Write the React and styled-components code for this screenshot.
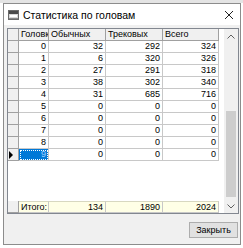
import React from "react";
import styled, {createGlobalStyle} from "styled-components";

const GlobalStyle = createGlobalStyle`
  html, body {
    margin: 0;
    padding: 0;
    background: #ffffff;
  }
  body {
    font-family: "Liberation Sans", Arial, sans-serif;
  }
`;

const rows = [
    {head: 0, normal: 32, track: 292, total: 324},
    {head: 1, normal: 6, track: 320, total: 326},
    {head: 2, normal: 27, track: 291, total: 318},
    {head: 3, normal: 38, track: 302, total: 340},
    {head: 4, normal: 31, track: 685, total: 716},
    {head: 5, normal: 0, track: 0, total: 0},
    {head: 6, normal: 0, track: 0, total: 0},
    {head: 7, normal: 0, track: 0, total: 0},
    {head: 8, normal: 0, track: 0, total: 0},
    {head: 9, normal: 0, track: 0, total: 0},
];

const COLS = "11px 30px 57px 57px 56px";

const App = () => {
    const selected = 9;
    return (
        <>
            <GlobalStyle/>
            <Page>
                <Window>
                    <TitleBar>
                        <AppIcon/>
                        <Title>Статистика по головам</Title>
                        <CloseButton aria-label="close">
                            <svg width="10" height="10" viewBox="0 0 10 10">
                                <path d="M1 1 L9 9 M9 1 L1 9" stroke="#222" strokeWidth="1" fill="none"/>
                            </svg>
                        </CloseButton>
                    </TitleBar>
                    <Body>
                        <GridFrame>
                            <GridMain>
                                <Row>
                                    <FixedCell/>
                                    <HeadCell>Головка</HeadCell>
                                    <HeadCell>Обычных</HeadCell>
                                    <HeadCell>Трековых</HeadCell>
                                    <HeadCell>Всего</HeadCell>
                                </Row>
                                {rows.map((r) => (
                                    <Row key={r.head}>
                                        <FixedCell>{r.head === selected && <Pointer/>}</FixedCell>
                                        <Cell $selected={r.head === selected}>
                                            <CellText $selected={r.head === selected}>{r.head}</CellText>
                                        </Cell>
                                        <Cell>{r.normal}</Cell>
                                        <Cell>{r.track}</Cell>
                                        <Cell>{r.total}</Cell>
                                    </Row>
                                ))}
                                <Spacer/>
                                <Row>
                                    <FixedCell/>
                                    <FooterCell $left>Итого:</FooterCell>
                                    <FooterCell>134</FooterCell>
                                    <FooterCell>1890</FooterCell>
                                    <FooterCell>2024</FooterCell>
                                </Row>
                            </GridMain>
                            <ScrollBar>
                                <Arrow>
                                    <svg width="8" height="5" viewBox="0 0 8 5">
                                        <path d="M0.5 4.5 L4 1 L7.5 4.5" stroke="#606060" strokeWidth="1" fill="none"/>
                                    </svg>
                                </Arrow>
                                <Track>
                                    <Thumb/>
                                </Track>
                                <Arrow>
                                    <svg width="8" height="5" viewBox="0 0 8 5">
                                        <path d="M0.5 0.5 L4 4 L7.5 0.5" stroke="#606060" strokeWidth="1" fill="none"/>
                                    </svg>
                                </Arrow>
                            </ScrollBar>
                        </GridFrame>
                        <ButtonRow>
                            <Button>Закрыть</Button>
                        </ButtonRow>
                    </Body>
                </Window>
            </Page>
        </>
    );
};

const AppIcon = () => (
    <IconBox>
        <svg width="11" height="10" viewBox="0 0 11 10">
            <rect x="0.5" y="0.5" width="10" height="9" fill="#d8d8d8" stroke="#6a6a6a"/>
            <rect x="1" y="1" width="9" height="3" fill="#4a4a4a"/>
            <rect x="2" y="5" width="7" height="2" fill="#ffffff"/>
            <rect x="1" y="8" width="9" height="1" fill="#8a8a8a"/>
        </svg>
    </IconBox>
);

export default App;

const Page = styled.div`
  width: 243px;
  height: 248px;
  padding: 3px 0 0 3px;
  box-sizing: border-box;
  background: linear-gradient(#e4e4e4 0 3px, #ffffff 3px);
`;

const Window = styled.div`
  width: 238px;
  height: 242px;
  box-sizing: border-box;
  border: 1px solid #8c8c8c;
  background: #f0f0f0;
  display: flex;
  flex-direction: column;
`;

const TitleBar = styled.div`
  height: 21px;
  flex: none;
  background: #ffffff;
  display: flex;
  align-items: center;
  padding-left: 1px;
`;

const IconBox = styled.div`
  width: 16px;
  display: flex;
  justify-content: center;
`;

const Title = styled.div`
  flex: 1;
  margin-left: 2px;
  font-size: 10.5px;
  color: #000;
`;

const CloseButton = styled.div`
  width: 16px;
  margin-right: 3px;
  display: flex;
  justify-content: center;
`;

const Body = styled.div`
  flex: 1;
  display: flex;
  flex-direction: column;
  padding: 3px 1px 6px 3px;
`;

const GridFrame = styled.div`
  height: 186px;
  box-sizing: border-box;
  border: 1px solid #828790;
  background: #ffffff;
  display: flex;
`;

const GridMain = styled.div`
  flex: 1;
  display: flex;
  flex-direction: column;
`;

const Row = styled.div`
  display: grid;
  grid-template-columns: ${COLS};
  height: 12px;
`;

const BaseCell = styled.div`
  box-sizing: border-box;
  border-right: 1px solid #c8c8c8;
  border-bottom: 1px solid #c8c8c8;
  font-size: 9px;
  line-height: 11px;
  color: #000;
  overflow: hidden;
  white-space: nowrap;
`;

const FixedCell = styled(BaseCell)`
  background: #f0f0f0;
  border-right-color: #a0a0a0;
  border-bottom-color: #a0a0a0;
  display: flex;
  align-items: center;
`;

const HeadCell = styled(BaseCell)`
  background: #f0f0f0;
  border-right-color: #a0a0a0;
  border-bottom-color: #a0a0a0;
  padding-left: 2px;
  text-overflow: clip;
`;

const Cell = styled(BaseCell)`
  text-align: right;
  padding-right: 2px;
  background: ${(p) => (p.$selected ? "#0078d7" : "#ffffff")};
  outline: ${(p) => (p.$selected ? "1px dotted #ffffff" : "none")};
  outline-offset: -2px;
`;

const CellText = styled.span`
  color: ${(p) => (p.$selected ? "#9fd0ff" : "#000")};
`;

const FooterCell = styled(BaseCell)`
  background: #ffffe6;
  border-top: 1px solid #d8d8c0;
  text-align: ${(p) => (p.$left ? "left" : "right")};
  padding: 0 2px;
  line-height: 10px;
`;

const Pointer = styled.div`
  margin-left: 1px;
  width: 0;
  height: 0;
  border-top: 4px solid transparent;
  border-bottom: 4px solid transparent;
  border-left: 4px solid #000;
`;

const Spacer = styled.div`
  flex: 1;
`;

const ScrollBar = styled.div`
  width: 14px;
  background: #f0f0f0;
  display: flex;
  flex-direction: column;
`;

const Arrow = styled.div`
  height: 14px;
  display: flex;
  align-items: center;
  justify-content: center;
`;

const Track = styled.div`
  flex: 1;
  display: flex;
  flex-direction: column;
  justify-content: flex-end;
  padding: 0 2px 2px;
`;

const Thumb = styled.div`
  height: 86px;
  background: #cdcdcd;
`;

const ButtonRow = styled.div`
  display: flex;
  justify-content: flex-end;
  margin-top: 8px;
  padding-right: 1px;
`;

const Button = styled.div`
  width: 49px;
  height: 16px;
  box-sizing: border-box;
  border: 1px solid #adadad;
  background: #e1e1e1;
  font-size: 9px;
  line-height: 14px;
  text-align: center;
  color: #000;
`;
